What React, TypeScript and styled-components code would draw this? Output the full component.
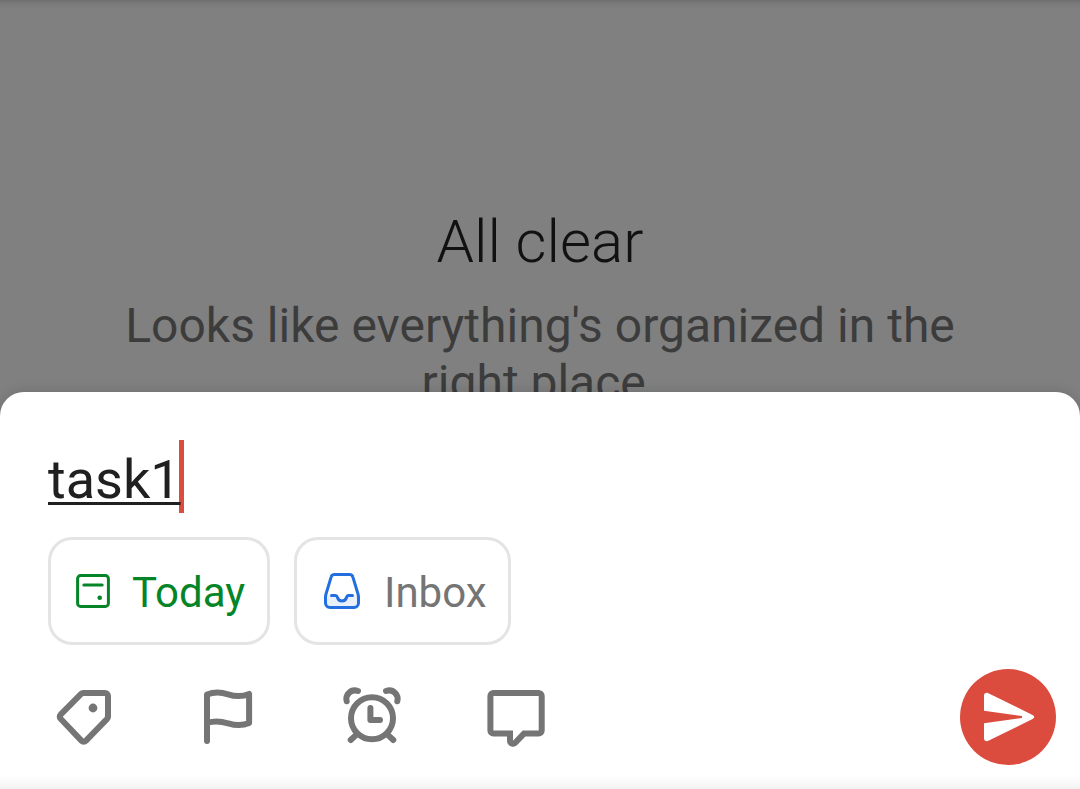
import React from "react";
import styled, { createGlobalStyle } from "styled-components";

const Global = createGlobalStyle`
  * { box-sizing: border-box; }
  body {
    margin: 0;
    font-family: Roboto, "Liberation Sans", sans-serif;
    overflow: hidden;
  }
`;
const Screen = styled.main`
  width: 1080px;
  height: 789px;
  display: flex;
  flex-direction: column;
  overflow: hidden;
  background: linear-gradient(#6e6e6e, #797979 3px, #808080 9px);
`;
const Empty = styled.section`
  flex: none;
  height: 392px;
  padding-top: 207px;
  text-align: center;
`;
const Title = styled.h1`
  margin: 0;
  font-size: 60px;
  line-height: 70px;
  font-weight: 300;
  color: #111;
`;
const Message = styled.p`
  margin: 20px auto 0;
  width: 900px;
  font-size: 48px;
  line-height: 57px;
  color: #3c3c3c;
`;
const Sheet = styled.section`
  flex: none;
  height: 397px;
  padding: 48px 24px 0 48px;
  border-radius: 24px 24px 0 0;
  background: linear-gradient(#fff 382px, #fafafa 390px, #f2f2f2 397px);
  box-shadow: 0 0 14px rgba(0, 0, 0, 0.14);
`;
const Field = styled.div`
  display: flex;
  height: 73px;
  font-size: 54px;
  line-height: 80px;
  color: #202020;
`;
const Typed = styled.span`
  z-index: 1;
  text-decoration: underline;
  text-decoration-thickness: 3px;
  text-decoration-skip-ink: none;
  text-underline-offset: 4px;
`;
const Caret = styled.i`
  width: 5px;
  margin-left: -2px;
  background: #dc4c3e;
`;
const Chips = styled.div`
  display: flex;
  gap: 24px;
  margin-top: 24px;
`;
const Chip = styled.button<{ $width: number; $color: string; $space: number }>`
  display: flex;
  align-items: center;
  width: ${p => p.$width}px;
  height: 108px;
  padding: 0 0 0 ${p => p.$space + 3}px;
  gap: ${p => p.$space}px;
  border: 3px solid #e4e4e4;
  border-radius: 24px;
  background: #fff;
  font: 400 42px/50px Roboto, sans-serif;
  color: ${p => p.$color};
`;
const ChipLabel = styled.span`
  padding-top: 4px;
`;
const ChipIcon = styled.svg`
  flex: none;
  width: 48px;
  height: 48px;
  fill: none;
  stroke: currentColor;
  stroke-width: 3;
  stroke-linecap: round;
  stroke-linejoin: round;
`;
const InboxIcon = styled(ChipIcon)`
  color: #246fe0;
`;
const Actions = styled.div`
  display: flex;
  align-items: center;
  gap: 72px;
  height: 96px;
  margin-top: 24px;
`;
const Action = styled.button`
  width: 72px;
  height: 72px;
  padding: 0;
  border: 0;
  background: none;
  color: #757575;
`;
const ActionIcon = styled.svg`
  display: block;
  width: 72px;
  height: 72px;
  fill: none;
  stroke: currentColor;
  stroke-width: 6;
  stroke-linecap: round;
`;
const Send = styled.button`
  width: 96px;
  height: 96px;
  margin-left: auto;
  padding: 0;
  border: 0;
  border-radius: 50%;
  background: #dc4c3e;
`;
const SendIcon = styled.svg`
  display: block;
  fill: #fff;
`;

export default function App() {
  return (
    <>
      <Global />
      <Screen>
        <Empty>
          <Title>All clear</Title>
          <Message>Looks like everything's organized in the right place.</Message>
        </Empty>
        <Sheet>
          <Field>
            <Typed>task1</Typed>
            <Caret />
          </Field>
          <Chips>
            <Chip $width={222} $color="#058527" $space={15}>
              <ChipIcon viewBox="0 0 48 48">
                <rect x="8.6" y="8.6" width="30.8" height="30.8" rx="3" />
                <path d="M14.8 18H33.2" />
                <circle cx="30.7" cy="30.7" r="2.3" fill="currentColor" stroke="none" />
              </ChipIcon>
              <ChipLabel>Today</ChipLabel>
            </Chip>
            <Chip $width={217} $color="#757575" $space={18}>
              <InboxIcon viewBox="0 0 48 48">
                <path
                  d="M8 28.5H17.5c1.5 0 1.7 1 2 2 .6 2 2.4 3.5 4.5 3.5s3.9-1.5 4.5-3.5c.3-1 .5-2 2-2H40V36a4.5 4.5 0 0 1-4.5 4.5H12A4.5 4.5 0 0 1 7.5 36Z"
                  fill="#e9f0fc"
                  stroke="none"
                />
                <path d="M16.5 7.5h15a3.5 3.5 0 0 1 3.4 2.6L40 27q.5 1.8.5 3.5V36a4.5 4.5 0 0 1-4.5 4.5H12A4.5 4.5 0 0 1 7.5 36V30.5q0-1.7.5-3.5L13.1 10.1A3.5 3.5 0 0 1 16.5 7.5Z" />
                <path d="M13.5 28.5H17.5c1.5 0 1.7 1 2 2 .6 2 2.4 3.5 4.5 3.5s3.9-1.5 4.5-3.5c.3-1 .5-2 2-2h4" />
              </InboxIcon>
              <ChipLabel>Inbox</ChipLabel>
            </Chip>
          </Chips>
          <Actions>
            <Action aria-label="Labels">
              <ActionIcon viewBox="0 0 72 72">
                <path d="M35.3 11.9H57A3 3 0 0 1 60 14.9V35.7A3 3 0 0 1 59.1 37.8L37.8 59.8A3 3 0 0 1 33.6 59.8L12.6 37.8A3 3 0 0 1 12.6 33.6L33.1 12.8A3 3 0 0 1 35.3 11.9Z" />
                <circle cx="45" cy="27" r="4.4" fill="currentColor" stroke="none" />
              </ActionIcon>
            </Action>
            <Action aria-label="Priority">
              <ActionIcon viewBox="0 0 72 72" strokeLinejoin="round">
                <path d="M15 60V13.5C24 10 32 12 36 13.3S48 17 57.1 12.9V42C48 46 40 43.5 36 42.3S24 39 15 42" />
              </ActionIcon>
            </Action>
            <Action aria-label="Reminders">
              <ActionIcon viewBox="0 0 72 72" strokeLinejoin="round">
                <circle cx="36" cy="37.3" r="21" />
                <path d="M34.4 27V39H44M20.7 53.3L14.7 59M51.3 53.3L57.3 59M10.7 20.3C9 14 14.5 7.5 22 10M61.3 20.3C63 14 57.5 7.5 50 10" />
              </ActionIcon>
            </Action>
            <Action aria-label="Comments">
              <ActionIcon viewBox="0 0 72 72">
                <path d="M13.4 12H58.7A3 3 0 0 1 61.7 15V49.6A3 3 0 0 1 58.7 52.6H44L35.1 61.8A3 3 0 0 1 30 59.7V52.6H13.4A3 3 0 0 1 10.4 49.6V15A3 3 0 0 1 13.4 12Z" />
              </ActionIcon>
            </Action>
            <Send aria-label="Add task">
              <SendIcon width="96" height="96" viewBox="0 0 96 96">
                <path d="M24 26.5c0-2.2 2.2-3.3 4.4-2.3L72.5 46c2.3 1.2 2.3 2.8 0 4L28.4 71.8c-2.2 1-4.4-.1-4.4-2.3V54.3L62 49V47L24 41.7Z" />
              </SendIcon>
            </Send>
          </Actions>
        </Sheet>
      </Screen>
    </>
  );
}
